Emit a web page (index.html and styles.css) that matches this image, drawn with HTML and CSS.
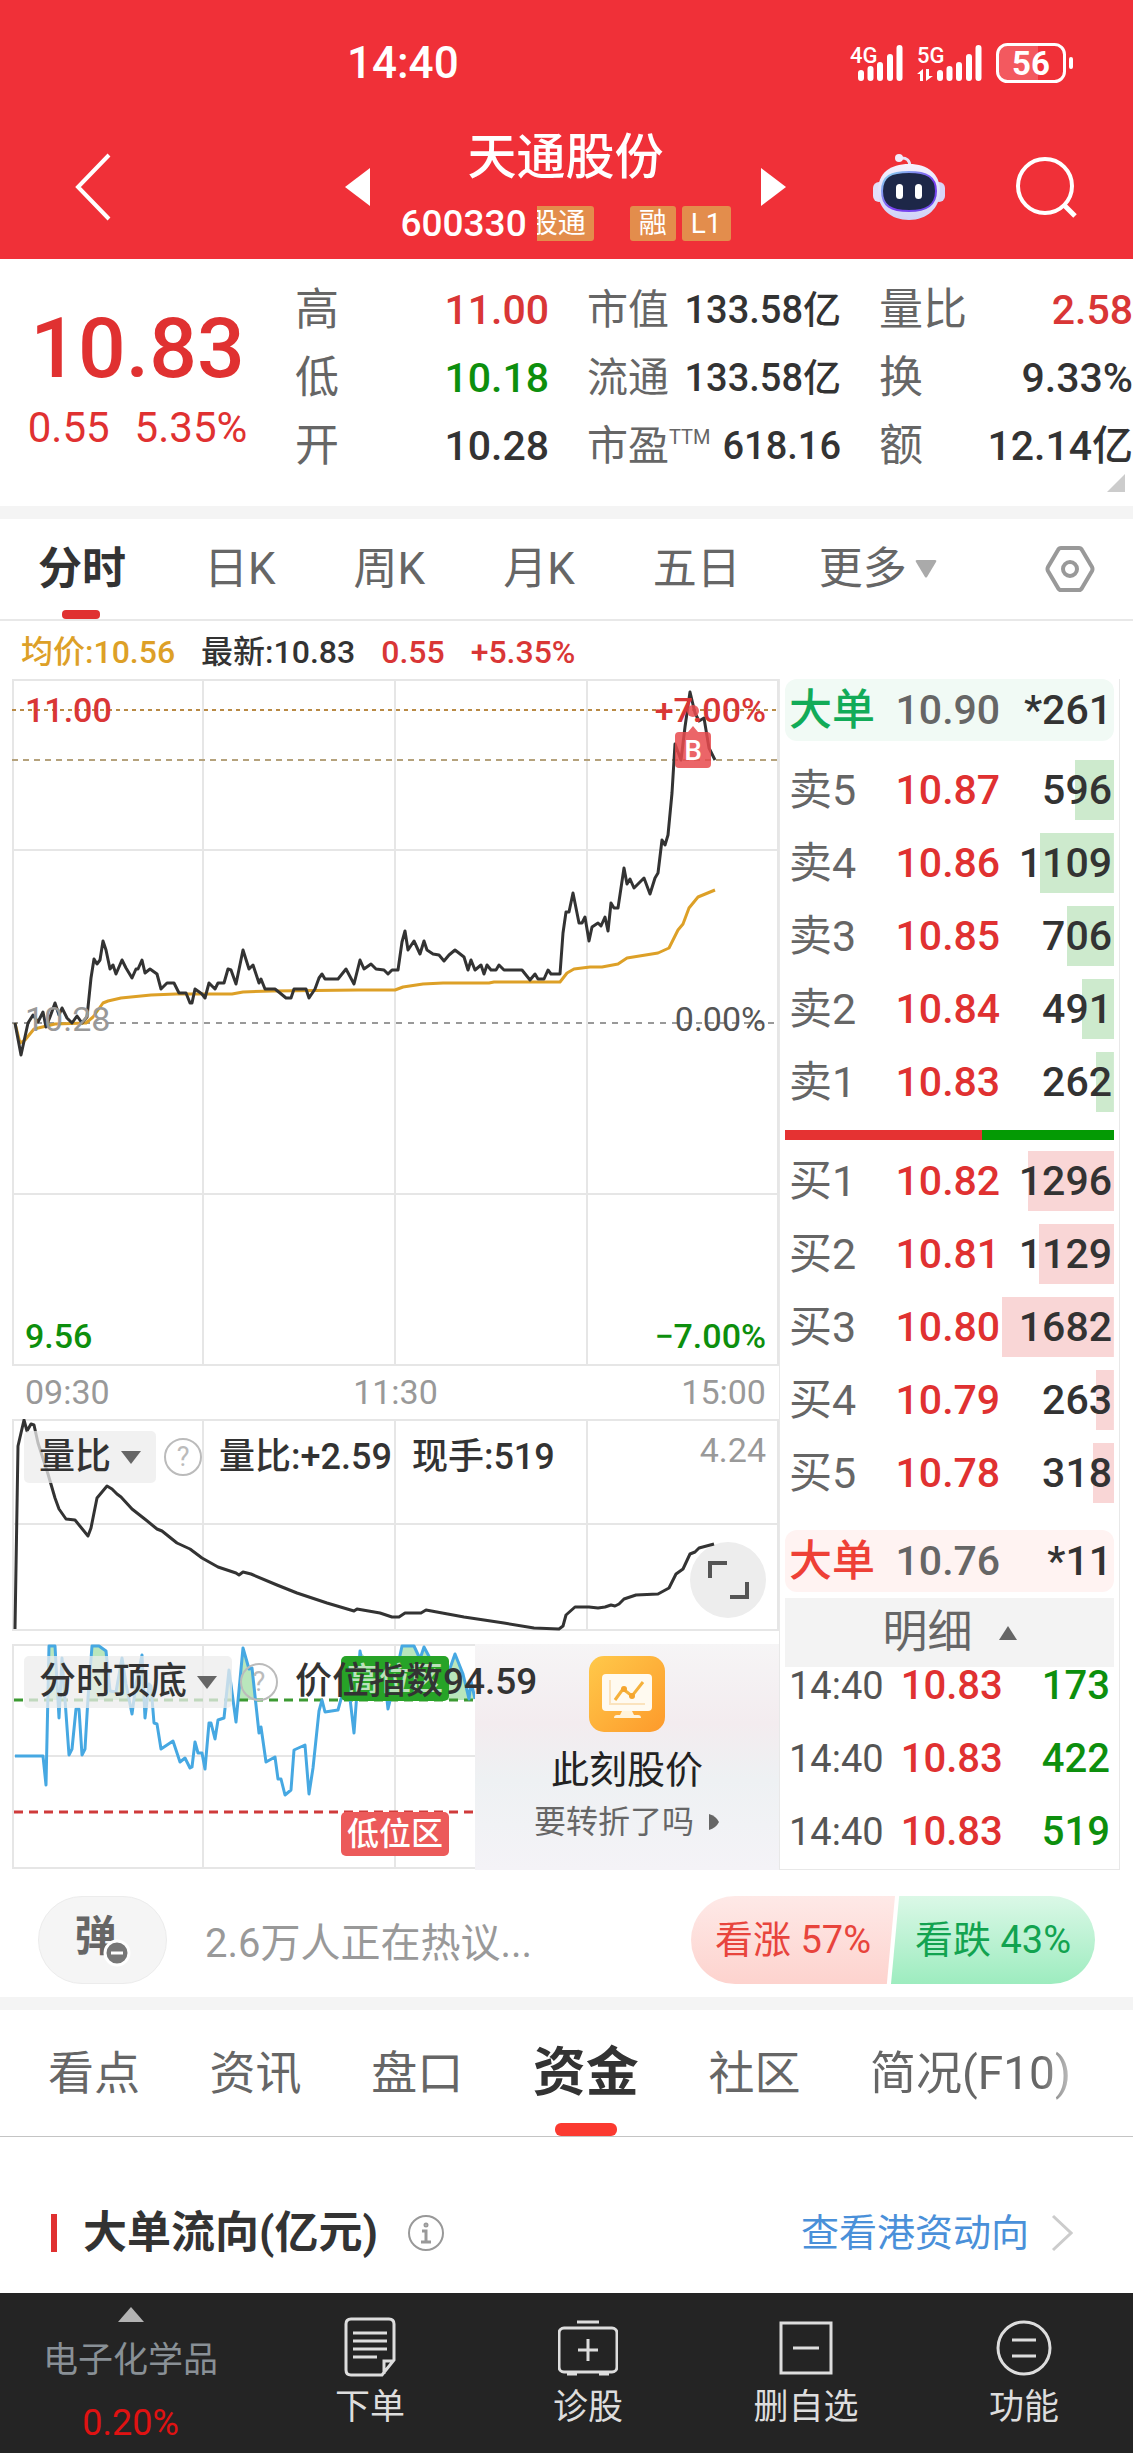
FILE: index.html
```html
<!DOCTYPE html>
<html lang="zh-CN">
<head>
<meta charset="utf-8">
<meta name="viewport" content="width=device-width, initial-scale=1">
<title>天通股份 600330</title>
<link rel="stylesheet" href="styles.css">
</head>
<body>
<header class="top">
  <div class="status">
    <span class="clock">14:40</span>
    <svg class="signals" width="224" height="42" viewBox="850 41 224 42" fill="#fff">
      <text x="850" y="62" font-size="22" font-weight="500">4G</text>
      <text x="917" y="62" font-size="22" font-weight="500">5G</text>
      <g stroke="#fff" stroke-width="6" stroke-linecap="round">
        <path d="M861 72v5M870.500 68v9M880 64v13M890 56v21M899.500 47v30M940 72v5M949.500 68v9M959 64v13M969 56v21M978.500 47v30"/>
      </g>
      <path d="M917 73l6-5v12h-3v-7zM926 68h3v7h4l-7 5z"/>
      <path d="M1008 44h30v36h-30q-9 0-9-9v-18q0-9 9-9z" fill-opacity=".2"/>
      <rect x="997.500" y="43.500" width="67" height="37" rx="10" fill="none" stroke="#fff" stroke-width="3"/>
      <rect x="1069" y="56" width="4" height="12" rx="2"/>
      <text x="1031" y="74" font-size="33" font-weight="700" text-anchor="middle">56</text>
    </svg>
  </div>
  <nav class="titlebar">
    <button class="icon-btn back" aria-label="返回"><svg width="40" height="68" viewBox="0 0 40 68"><path d="M35 2L4 34l31 32" fill="none" stroke="#fff" stroke-width="4"/></svg></button>
    <div class="stock">
      <button class="icon-btn" aria-label="上一只"><svg width="25" height="38" viewBox="0 0 25 38"><path d="M25 0v38L0 19z" fill="#fff"/></svg></button>
      <div class="stock-name">
        <h1>天通股份</h1>
        <p><span class="code">600330</span><span class="tag cut"><span>股通</span></span><span class="tag gap">融</span><span class="tag">L1</span></p>
      </div>
      <button class="icon-btn" aria-label="下一只"><svg width="25" height="38" viewBox="0 0 25 38"><path d="M0 0v38l25-19z" fill="#fff"/></svg></button>
    </div>
    <button class="icon-btn robot" aria-label="智能助手">
      <svg width="72" height="68" viewBox="0 0 72 68">
        <defs>
          <linearGradient id="shell" x1="0" y1="0" x2="0" y2="1"><stop offset="0" stop-color="#f6f1fd"/><stop offset="1" stop-color="#cfd2f7"/></linearGradient>
          <linearGradient id="rim" x1="0" y1="0" x2="1" y2="1"><stop offset="0" stop-color="#8be0f0"/><stop offset=".6" stop-color="#7a3df0"/><stop offset="1" stop-color="#6a50e8"/></linearGradient>
        </defs>
        <path d="M27 5q10-1 10 9" fill="none" stroke="#e9e2f8" stroke-width="3"/><circle cx="26" cy="5" r="4" fill="#f2ecfb"/>
        <rect x="0" y="29" width="12" height="20" rx="6" fill="#e2dff8"/><rect x="60" y="29" width="12" height="20" rx="6" fill="#d8d4f6"/>
        <path d="M36 11C55 11 67 21 67 38S54 67 36 67 5 56 5 38 17 11 36 11z" fill="url(#shell)"/>
        <path d="M36 19C54 19 63 24 63 38S54 58 36 58 9 53 9 38 18 19 36 19z" fill="#1d2748" stroke="url(#rim)" stroke-width="2"/>
        <rect x="23" y="31" width="7" height="15" rx="3.500" fill="#fff"/><rect x="42" y="31" width="7" height="15" rx="3.500" fill="#fff"/>
      </svg>
    </button>
    <button class="icon-btn search" aria-label="搜索"><svg width="62" height="62" viewBox="0 0 62 62" fill="none" stroke="#fff" stroke-width="4"><circle cx="29" cy="30" r="27"/><path d="M48 49l11 11" stroke-width="5"/></svg></button>
  </nav>
</header>

<main>
<section class="quote">
  <div class="price">
    <strong>10.83</strong>
    <p><span>0.55</span><span>5.35%</span></p>
  </div>
  <dl>
    <div><dt>高</dt><dd class="up">11.00</dd></div>
    <div><dt>低</dt><dd class="down">10.18</dd></div>
    <div><dt>开</dt><dd>10.28</dd></div>
  </dl>
  <dl class="tight">
    <div><dt>市值</dt><dd>133.58亿</dd></div>
    <div><dt>流通</dt><dd>133.58亿</dd></div>
    <div><dt>市盈<sup>TTM</sup></dt><dd>618.16</dd></div>
  </dl>
  <dl>
    <div><dt>量比</dt><dd class="up">2.58</dd></div>
    <div><dt>换</dt><dd>9.33%</dd></div>
    <div><dt>额</dt><dd>12.14亿</dd></div>
  </dl>
  <svg class="corner" width="18" height="18" viewBox="0 0 18 18"><path d="M18 0v18H0z" fill="#ccc"/></svg>
</section>

<nav class="periods">
  <button class="on">分时</button>
  <button>日K</button>
  <button>周K</button>
  <button>月K</button>
  <button>五日</button>
  <button>更多<svg width="22" height="18" viewBox="0 0 22 18"><path d="M2 0h18q2 0 1 2L12 17q-1 1-2 0L1 2Q0 0 2 0z" fill="#aaa"/></svg></button>
  <button class="gear" aria-label="设置"><svg width="50" height="48" viewBox="0 0 50 48" fill="none" stroke="#999" stroke-width="4"><path d="M16 3h18q2 0 3 2l10 17q1 2 0 4L37 43q-1 2-3 2H16q-2 0-3-2L3 26q-1-2 0-4L13 5q1-2 3-2z"/><circle cx="25" cy="24" r="7"/></svg></button>
</nav>

<p class="legend"><span class="avg">均价:10.56</span><span>最新:10.83</span><span class="up">0.55</span><span class="up">+5.35%</span></p>

<div class="market">
  <div class="charts">
    <div class="chart">
      <svg viewBox="12 679 767 687" fill="none">
        <path d="M13 680H778V1365H13zM203 680V1365M395 680V1365M587 680V1365M13 850H778M13 1194H778" stroke="#e6e6e6" stroke-width="2"/>
        <path d="M12 710H779" stroke="#b98a45" stroke-width="2" stroke-dasharray="4 4"/>
        <path d="M12 760H779" stroke="#b5a27c" stroke-width="2" stroke-dasharray="6 5"/>
        <path d="M12 1023H779" stroke="#999" stroke-width="2" stroke-dasharray="6 6"/>
        <polyline stroke="#dda027" stroke-width="3" stroke-linejoin="round" points="15,1023 20,1043 25,1040 34,1029 55,1024 86,1023 93,1017 103,1003 108,1001 121,998 151,995 176,994 232,994 243,992 272,991 358,990 395,990 403,987 423,984 443,983 489,983 494,982 560,982 567,973 574,969 590,967 602,967 618,964 627,958 658,953 669,948 678,930 683,924 689,908 698,897 715,890"/>
        <polyline stroke="#333" stroke-width="3" stroke-linejoin="round" points="15,1023 21,1055 28,1023 33,1015 38,1022 43,1012 46,1027 50,1017 55,1003 59,1015 62,1008 67,1018 72,1023 77,1016 82,1023 87,1017 91,978 94,959 97,964 100,960 103,941 106,950 110,969 113,965 116,974 122,960 126,968 132,978 136,969 138,969 142,960 145,973 150,969 157,974 161,989 167,983 174,983 179,993 186,993 190,1003 192,1003 195,989 202,994 205,998 209,983 215,989 218,983 224,983 228,969 231,970 236,984 243,950 249,969 253,965 259,983 261,979 265,989 275,989 280,993 286,998 291,998 294,989 306,989 309,998 315,989 319,978 322,974 325,979 338,979 346,969 354,984 360,960 364,969 371,964 376,969 384,970 388,974 392,970 398,970 402,942 405,931 408,950 414,941 420,954 424,941 427,950 433,954 439,955 444,961 449,955 455,950 464,957 468,970 471,960 475,970 481,965 484,974 487,965 491,970 496,970 499,965 504,970 522,970 530,980 535,974 538,979 544,979 548,970 551,974 560,974 563,933 566,912 569,912 573,893 579,923 582,923 585,917 589,941 592,927 598,923 601,926 605,917 608,931 611,903 614,908 618,908 624,868 627,884 630,879 634,888 639,883 644,878 650,894 655,878 658,873 662,840 665,845 668,835 672,793 675,744 681,760 685,727 690,692 695,713 699,721 704,718 709,748 715,760"/>
        <g fill="#e84a4e" fill-opacity=".85"><circle cx="693" cy="711" r="6"/><path d="M688 732l5-6 5 6h9q4 0 4 4v28q0 4-4 4h-28q-4 0-4-4v-28q0-4 4-4z"/></g>
        <text x="693" y="760" font-size="28" text-anchor="middle" fill="#fff">B</text>
      </svg>
      <span class="lab tl up">11.00</span><span class="lab tr up">+7.00%</span>
      <span class="lab ml">10.28</span><span class="lab mr">0.00%</span>
      <span class="lab bl down">9.56</span><span class="lab br down">−7.00%</span>
    </div>
    <p class="axis"><span>09:30</span><span>11:30</span><span>15:00</span></p>

    <div class="chart">
      <svg viewBox="12 1418 767 212" fill="none">
        <path d="M13 1419H778V1629H13zM203 1419V1629M395 1419V1629M587 1419V1629M13 1523H778" stroke="#e6e6e6" stroke-width="2"/>
        <circle cx="728" cy="1579" r="38" fill="#ededed"/>
        <path d="M710 1577v-15h17M747 1581v15h-17" stroke="#555" stroke-width="4"/>
        <polyline stroke="#333" stroke-width="3" stroke-linejoin="round" points="15,1628 18,1445 24,1419 27,1430 31,1423 34,1424 38,1442 48,1473 55,1497 59,1508 66,1518 75,1519 88,1535 91,1527 97,1497 107,1485 112,1488 117,1493 121,1496 132,1508 146,1519 157,1528 162,1530 177,1542 190,1548 202,1557 218,1566 236,1572 239,1574 243,1571 251,1573 277,1584 297,1592 327,1602 354,1610 357,1608 380,1612 392,1616 399,1616 405,1612 421,1612 426,1609 464,1616 504,1622 534,1627 559,1628 563,1625 566,1614 575,1606 589,1606 598,1607 605,1606 611,1604 615,1605 619,1603 624,1598 636,1594 658,1593 669,1587 676,1573 683,1568 690,1553 695,1551 699,1547 714,1543"/>
      </svg>
      <div class="ind">
        <button class="pill">量比<i class="caret"></i></button>
        <span class="help">?</span>
        <span class="vals"><span>量比:+2.59</span><span>现手:519</span></span>
        <span class="max">4.24</span>
      </div>
    </div>

    <div class="chart last">
      <svg viewBox="12 1643 767 226" fill="none">
        <clipPath id="high"><path d="M12 1643H475V1699H12z"/></clipPath>
        <path d="M13 1644H778V1867H13zM203 1644V1867M395 1644V1867M13 1755H778" stroke="#e6e6e6" stroke-width="2"/>
        <polygon clip-path="url(#high)" fill="#b9e6bc" points="15,1755 46,1784 49,1645 55,1645 59,1717 62,1657 69,1754 82,1754 88,1697 92,1645 99,1645 106,1650 110,1690 116,1691 122,1657 126,1683 132,1713 136,1683 142,1654 145,1717 149,1683 154,1722 205,1768 224,1717 229,1669 236,1721 243,1647 249,1668 252,1667 259,1732 309,1793 354,1732 360,1650 371,1663 385,1680 388,1708 393,1687 402,1645 414,1645 420,1658 424,1646 433,1663 443,1687 455,1653 463,1673 469,1698 471,1680 475,1698"/>
        <path d="M14 1699H475" stroke="#3c9a32" stroke-width="3" stroke-dasharray="9 6"/>
        <path d="M14 1811H475" stroke="#cf3b3b" stroke-width="3" stroke-dasharray="9 6"/>
        <polyline stroke="#46a8e2" stroke-width="3" stroke-linejoin="round" points="15,1755 43,1755 46,1784 49,1645 55,1645 59,1717 62,1657 69,1754 72,1748 76,1708 79,1708 82,1754 85,1748 88,1697 92,1645 99,1645 106,1650 110,1690 116,1691 122,1657 126,1683 132,1713 136,1683 142,1654 145,1717 149,1683 151,1685 154,1722 157,1723 161,1748 173,1740 180,1761 185,1757 190,1767 192,1766 195,1741 198,1752 202,1752 205,1768 209,1722 211,1722 215,1738 218,1719 224,1717 229,1669 236,1721 243,1647 249,1668 252,1667 259,1732 261,1726 266,1761 275,1756 278,1778 281,1778 285,1794 291,1789 294,1749 305,1744 309,1793 313,1767 319,1710 322,1699 325,1711 338,1709 341,1698 348,1680 354,1732 360,1650 364,1673 371,1663 376,1677 385,1680 388,1708 393,1687 402,1645 414,1645 420,1658 424,1646 433,1663 443,1687 455,1653 463,1673 469,1698 471,1680 475,1698"/>
        <rect x="341" y="1655" width="108" height="45" rx="5" fill="#27a327"/>
        <rect x="341" y="1811" width="108" height="44" rx="5" fill="#ec5a5a"/>
        <g font-size="32" fill="#fff" text-anchor="middle"><text x="395" y="1689" fill-opacity=".7">高位区</text><text x="395" y="1844">低位区</text></g>
      </svg>
      <a class="promo" href="#turning">
        <svg width="76" height="76" viewBox="0 0 76 76">
          <defs><linearGradient id="sun" x1="0" y1="0" x2="1" y2="1"><stop offset="0" stop-color="#ffc94a"/><stop offset="1" stop-color="#fd9a2b"/></linearGradient></defs>
          <rect width="76" height="76" rx="15" fill="url(#sun)"/>
          <rect x="13" y="18" width="50" height="37" rx="4" fill="#fffaf0"/><path d="M33 55h10l2 4h4q3 0 3 3H25q0-3 3-3h3z" fill="#fff3dc"/>
          <path d="M21 24v24h35" fill="none" stroke="#fbe3bd" stroke-width="2"/>
          <path d="M26 44l8-11 9 7 11-14" fill="none" stroke="#f5b13c" stroke-width="3"/><circle cx="35" cy="33" r="3" fill="#f5a52e"/><circle cx="43" cy="40" r="3" fill="#f5a52e"/>
        </svg>
        <b>此刻股价</b>
        <span>要转折了吗<svg width="12" height="18" viewBox="0 0 12 18"><path d="M1 1q7 2 10 8-3 6-10 8z" fill="#666"/></svg></span>
      </a>
      <div class="ind">
        <button class="pill">分时顶底<i class="caret"></i></button>
        <span class="help">?</span>
        <span class="vals">价位指数94.59</span>
      </div>
    </div>
  </div>

  <aside class="book">
    <p class="big sell"><b>大单</b><span>10.90</span><em>*261</em></p>
    <table class="asks">
      <tr><th>卖5</th><td>10.87</td><td class="vol" style="background-size:35% 60px">596</td></tr>
      <tr><th>卖4</th><td>10.86</td><td class="vol" style="background-size:66% 60px">1109</td></tr>
      <tr><th>卖3</th><td>10.85</td><td class="vol" style="background-size:42% 60px">706</td></tr>
      <tr><th>卖2</th><td>10.84</td><td class="vol" style="background-size:29% 60px">491</td></tr>
      <tr><th>卖1</th><td>10.83</td><td class="vol" style="background-size:16% 60px">262</td></tr>
    </table>
    <div class="ratio"><i style="width:60%"></i></div>
    <table class="bids">
      <tr><th>买1</th><td>10.82</td><td class="vol" style="background-size:77% 60px">1296</td></tr>
      <tr><th>买2</th><td>10.81</td><td class="vol" style="background-size:67% 60px">1129</td></tr>
      <tr><th>买3</th><td>10.80</td><td class="vol" style="background-size:100% 60px">1682</td></tr>
      <tr><th>买4</th><td>10.79</td><td class="vol" style="background-size:16% 60px">263</td></tr>
      <tr><th>买5</th><td>10.78</td><td class="vol" style="background-size:19% 60px">318</td></tr>
    </table>
    <p class="big buy"><b>大单</b><span>10.76</span><em>*11</em></p>
    <button class="detail">明细<svg width="18" height="14" viewBox="0 0 18 14"><path d="M9 0l9 14H0z" fill="#666"/></svg></button>
    <div class="ticks">
      <table>
        <tr><th>14:40</th><td>10.83</td><td class="qty">173</td></tr>
        <tr><th>14:40</th><td>10.83</td><td class="qty">422</td></tr>
        <tr><th>14:40</th><td>10.83</td><td class="qty">519</td></tr>
      </table>
    </div>
  </aside>
</div>

<section class="talk">
  <button class="danmu" aria-label="弹幕">弹<svg width="28" height="28" viewBox="0 0 28 28"><circle cx="14" cy="14" r="12" fill="#777" stroke="#fff" stroke-width="3"/><path d="M8 14h12" stroke="#fff" stroke-width="3"/></svg></button>
  <span class="hot">2.6万人正在热议...</span>
  <div class="vote"><button class="bull">看涨 57%</button><button class="bear">看跌 43%</button></div>
</section>

<nav class="sections">
  <button>看点</button><button>资讯</button><button>盘口</button><button class="on">资金</button><button>社区</button><button class="fade">简况(F10)</button>
</nav>

<section class="flow">
  <h2>大单流向(亿元)</h2>
  <svg width="36" height="36" viewBox="0 0 36 36" fill="none" stroke="#999" stroke-width="2"><circle cx="18" cy="18" r="17"/><path d="M14 16h4v10M13 27h10" stroke-width="3"/><circle cx="18" cy="10" r="1" stroke-width="3"/></svg>
  <a href="#hk">查看港资动向<svg width="22" height="38" viewBox="0 0 22 38"><path d="M2 2l18 17L2 36" fill="none" stroke="#ccc" stroke-width="3"/></svg></a>
</section>
</main>

<nav class="dock">
  <button class="sector"><svg width="26" height="15" viewBox="0 0 26 15"><path d="M13 0l13 15H0z" fill="#b3b3b3"/></svg><span>电子化学品</span><b>0.20%</b></button>
  <button><svg width="60" height="60" viewBox="0 0 60 60"><path d="M11 2h38q5 0 5 5v36L42 58H11q-5 0-5-5V7q0-5 5-5zM13 16h34M13 24h34M13 32h34M13 40h24M54 44H44v13"/></svg>下单</button>
  <button><svg width="60" height="60" viewBox="0 0 60 60"><rect x="1" y="11" width="58" height="44" rx="5"/><path d="M19 5h22M20 33h20M30 22v22M9 57h10M41 57h10"/></svg>诊股</button>
  <button><svg width="60" height="60" viewBox="0 0 60 60"><path d="M5 6h50v50H5zM17 31h26"/></svg>删自选</button>
  <button><svg width="60" height="60" viewBox="0 0 60 60"><circle cx="30" cy="31" r="26"/><path d="M18 23h24M18 39h24"/></svg>功能</button>
</nav>
</body>
</html>
```
FILE: styles.css
```css
* { box-sizing: border-box; margin: 0; padding: 0; }
body {
  font-family: Roboto, "Noto Sans CJK SC", sans-serif;
  color: #333;
  background: #fff;
  font-weight: 500;
}
button { font: inherit; color: inherit; background: none; border: 0; white-space: nowrap; }
a { text-decoration: none; color: inherit; }
svg { display: block; flex: none; }
em, i { font-style: normal; }
b { font-weight: inherit; }
.up { color: #d93636; }
.down { color: #0d8f0d; }

.top { background: #f03038; color: #fff; }
.status { display: flex; align-items: center; justify-content: space-between; height: 126px; padding: 0 59px 0 347px; }
.clock { font-size: 44px; line-height: 52px; }
.titlebar { display: flex; align-items: center; height: 133px; padding: 0 55px 12px 74px; }
.icon-btn { display: flex; flex: none; }
.back { margin-right: auto; }
.stock { display: flex; align-items: center; justify-content: space-between; width: 441px; }
.stock-name { display: flex; flex-direction: column; align-items: center; padding-top: 6px; white-space: nowrap; }
.stock-name h1 { font-size: 49px; line-height: 68px; font-weight: 500; }
.stock-name p { display: flex; align-items: center; gap: 6px; line-height: 64px; }
.code { font-size: 37px; margin-right: 4px; }
.tag { background: #e38d4c; font-size: 28px; line-height: 35px; padding: 0 9px; border-radius: 3px; font-weight: 400; }
.cut { display: flex; justify-content: flex-end; width: 57px; overflow: hidden; padding: 0 8px 0 0; border-radius: 0 3px 3px 0; }
.gap { margin-left: 30px; }
.robot { margin-left: 87px; }
.search { margin-left: 71px; }

.quote {
  position: relative;
  display: grid;
  grid-template-columns: 257fr 254fr 254fr 254fr;
  column-gap: 38px;
  padding: 18px 0 25px;
  border-bottom: 13px solid #f4f4f4;
}
.price { padding: 16px 0 0 18px; text-align: center; color: #e03131; white-space: nowrap; }
.price strong { display: block; font-size: 84px; line-height: 112px; font-weight: 500; }
.price p { display: flex; justify-content: center; gap: 25px; font-size: 42px; line-height: 46px; font-weight: 400; }
.quote dl > div { display: flex; justify-content: space-between; height: 68px; line-height: 66px; white-space: nowrap; }
.quote dt { color: #666; font-size: 44px; font-weight: 400; }
.quote dd { font-size: 41px; }
.quote .tight dt { font-size: 41px; }
.quote .tight dd { font-size: 38px; }
.quote sup { font-size: 20px; line-height: 20px; vertical-align: 16px; }
.corner { position: absolute; right: 8px; bottom: 14px; }

.periods { display: flex; align-items: center; gap: 78px; height: 102px; padding: 0 38px; font-size: 44px; line-height: 60px; font-weight: 400; color: #666; border-bottom: 2px solid #e8e8e8; }
.periods button { display: flex; align-items: center; gap: 8px; height: 100%; }
.periods .on { position: relative; font-weight: 700; color: #333; }
.periods .on::after { content: ""; position: absolute; left: 24px; bottom: 0; width: 38px; height: 9px; border-radius: 4px; background: #e03131; }
.periods .gear { margin-left: auto; }

.legend { display: flex; gap: 26px; padding: 4px 21px 0; font-size: 32px; line-height: 54px; white-space: nowrap; }
.avg { color: #dda027; }

.market { display: grid; grid-template-columns: 767fr 341fr; margin: 0 13px 0 12px; }
.charts, .book { min-width: 0; }
.chart { position: relative; }
.chart > svg { width: 100%; height: auto; }
.lab { position: absolute; font-size: 34px; line-height: 40px; }
.tl, .ml, .bl { left: 13px; }
.tr, .mr, .br { right: 13px; }
.tl, .tr { top: 11px; }
.ml, .mr { top: 320px; }
.ml { color: #999; font-weight: 400; }
.mr { color: #555; font-weight: 400; }
.bl, .br { bottom: 10px; }
.axis { display: flex; justify-content: space-between; padding: 0 13px; font-size: 34px; line-height: 53px; font-weight: 400; color: #999; }
.ind { position: absolute; left: 12px; right: 13px; top: 12px; display: flex; align-items: center; height: 52px; font-size: 36px; line-height: 50px; white-space: nowrap; }
.pill { display: flex; align-items: center; gap: 10px; height: 52px; padding: 0 15px; border-radius: 5px; background: rgba(236, 236, 236, .75); }
.caret { border: 10px solid transparent; border-top: 13px solid #666; border-bottom: 0; }
.help { width: 38px; height: 38px; margin: 0 17px 0 8px; border: 2px solid #bbb; border-radius: 50%; text-align: center; font-size: 27px; line-height: 34px; color: #bbb; font-weight: 400; }
.vals { display: flex; gap: 20px; }
.max { align-self: flex-start; margin-left: auto; font-size: 34px; line-height: 38px; font-weight: 400; color: #999; }
.last { margin-top: 13px; }
.last .ind { font-size: 37px; }
.promo {
  position: absolute; right: 0; top: 0; bottom: 0; width: 304px;
  display: flex; flex-direction: column; align-items: center; padding-top: 12px;
  background: linear-gradient(#f6f5f6, #f3ecef 35%, #eef1f3 60%, #f4f3f7);
  white-space: nowrap;
}
.promo b { margin-top: 12px; font-size: 38px; line-height: 52px; color: #222; font-weight: 400; }
.promo span { display: flex; align-items: center; gap: 14px; font-size: 32px; line-height: 52px; color: #666; font-weight: 400; }

.book { display: flex; flex-direction: column; padding: 0 5px; border: 1px solid #e8e8e8; border-top: 0; font-size: 41px; line-height: 60px; }
.book table { width: 100%; border-collapse: collapse; table-layout: fixed; }
.book tr { height: 73px; }
.book th, .big b { width: 33%; padding-left: 4px; text-align: left; font-size: 43px; font-weight: 400; color: #666; }
.book td, .big span { width: 33%; padding-left: 2px; color: #e03131; }
.book .vol { width: 34%; padding: 0 2px 0 0; text-align: right; color: #333; background-position: right center; background-repeat: no-repeat; }
.asks { margin-top: 12px; }
.asks .vol { background-image: linear-gradient(#cdeacd, #cdeacd); }
.bids .vol { background-image: linear-gradient(#f9d6d6, #f9d6d6); }
.big { display: flex; align-items: center; height: 62px; border-radius: 12px; }
.big span { color: #666; }
.big em { flex: 1; text-align: right; padding-right: 2px; }
.sell { background: #f1faf5; }
.buy { margin-top: 21px; background: #fff3f2; }
.book .big b { font-weight: 500; }
.book .sell b { color: #12ab58; }
.book .buy b { color: #ee4036; }
.ratio { height: 10px; margin: 12px 0 4px; background: #049a04; }
.ratio i { display: block; height: 10px; background: #e53232; }
.detail { display: flex; align-items: center; justify-content: center; gap: 26px; height: 69px; margin-top: 6px; background: #f3f3f3; font-size: 45px; font-weight: 400; color: #666; }
.ticks { height: 201px; overflow: hidden; display: flex; align-items: flex-end; }
.book .ticks th { font-size: 38px; color: #555; }
.book .ticks td { font-size: 40px; padding-left: 6px; }
.book .ticks .qty { text-align: right; padding: 0 4px 0 0; color: #0d8f0d; }

.talk { display: flex; align-items: center; padding: 26px 38px 13px; border-bottom: 13px solid #f4f4f4; }
.danmu { display: flex; align-items: center; justify-content: center; width: 129px; height: 88px; padding-bottom: 6px; border: 1px solid #ececec; border-radius: 44px; background: #f5f5f5; font-size: 42px; line-height: 60px; font-weight: 700; color: #666; }
.danmu svg { margin: 32px 0 0 -14px; }
.hot { margin-left: 38px; font-size: 40px; font-weight: 400; color: #999; }
.vote { display: flex; margin-left: auto; width: 404px; height: 88px; }
.vote button { flex: 1; font-size: 38px; line-height: 60px; font-weight: 400; }
.vote .bull { border-radius: 44px 0 0 44px; background: linear-gradient(#fee9e7, #fdd3ce); color: #e8443c; clip-path: polygon(0 0, 100% 0, 96% 100%, 0 100%); }
.vote .bear { border-radius: 0 44px 44px 0; background: linear-gradient(#dbf8e7, #9decbf); color: #12a350; clip-path: polygon(4% 0, 100% 0, 100% 100%, 0 100%); margin-left: -4px; }

.sections { display: flex; align-items: center; justify-content: space-between; height: 127px; padding: 0 62px 0 48px; border-bottom: 1px solid #c4c4c4; font-size: 46px; line-height: 66px; font-weight: 400; color: #666; }
.sections button { height: 100%; }
.sections .on { position: relative; font-size: 53px; font-weight: 700; color: #333; }
.sections .on::after { content: ""; position: absolute; left: calc(50% - 31px); bottom: 0; width: 62px; height: 13px; border-radius: 6px; background: #fb3a30; }
.sections .fade { -webkit-mask-image: linear-gradient(90deg, #000 85%, rgba(0, 0, 0, .4)); mask-image: linear-gradient(90deg, #000 85%, rgba(0, 0, 0, .4)); }

.flow { display: flex; align-items: center; gap: 30px; padding: 64px 60px 28px 51px; line-height: 64px; white-space: nowrap; }
.flow h2 { display: flex; align-items: center; gap: 26px; font-size: 44px; font-weight: 700; }
.flow h2::before { content: ""; width: 6px; height: 38px; background: #e03131; }
.flow a { display: flex; align-items: center; gap: 22px; margin-left: auto; font-size: 38px; font-weight: 400; color: #4a90d9; }

.dock { display: grid; grid-template-columns: 261fr 218fr 218fr 218fr 218fr; height: 161px; background: #242424; color: #ddd; font-size: 35px; font-weight: 400; }
.dock button { display: flex; flex-direction: column; align-items: center; padding-top: 24px; line-height: 62px; }
.dock svg { fill: none; stroke: #ddd; stroke-width: 3; }
.dock .sector { padding-top: 14px; color: #899096; line-height: 62px; }
.dock .sector svg { stroke: none; }
.dock .sector span { margin-top: 8px; }
.dock .sector b { font-size: 36px; color: #e01212; }
```
